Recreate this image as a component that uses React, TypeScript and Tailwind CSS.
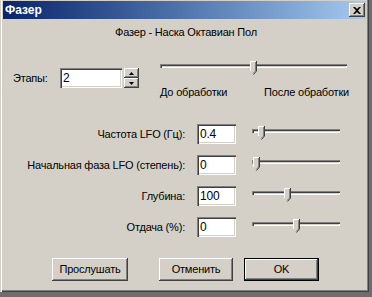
const raised =
  'shadow-[inset_-1px_-1px_#404040,inset_1px_1px_#ffffff,inset_-2px_-2px_#808080]';
const sunken =
  'shadow-[inset_1px_1px_#808080,inset_2px_2px_#404040,inset_-1px_-1px_#ffffff,inset_-2px_-2px_#d4d0c8]';

function Thumb() {
  return (
    <svg width="7" height="14" viewBox="0 0 7 14" className="block">
      <polygon points="0,0 7,0 7,10 3.5,13.5 0,10" fill="#d4d0c8" />
      <polyline points="0.5,10 0.5,0.5 6,0.5" fill="none" stroke="#ffffff" />
      <polyline points="5.5,1 5.5,10 3,12.5" fill="none" stroke="#808080" />
      <polyline points="6.5,0 6.5,10 3.5,13.5" fill="none" stroke="#404040" />
    </svg>
  );
}

function Slider({ width, pos }: { width: number; pos: number }) {
  return (
    <div className="relative h-[16px]" style={{ width }}>
      <div className="absolute left-0 right-0 top-[5px] h-[4px] bg-[#d4d0c8] shadow-[inset_1px_1px_#808080,inset_2px_2px_#404040,inset_-1px_-1px_#ffffff]" />
      <div className="absolute top-[2px]" style={{ left: pos }}>
        <Thumb />
      </div>
    </div>
  );
}

function Field({ value, width }: { value: string; width: number }) {
  return (
    <div
      className={`h-[20px] bg-white ${sunken} pl-[3px] text-[12px] leading-[20px] text-black`}
      style={{ width }}
    >
      {value}
    </div>
  );
}

function Arrow({ up }: { up?: boolean }) {
  return (
    <svg width="5" height="3" viewBox="0 0 5 3" className="block">
      <polygon points={up ? '2.5,0 5,3 0,3' : '0,0 5,0 2.5,3'} fill="#000" />
    </svg>
  );
}

const rows = [
  { label: 'Частота LFO (Гц):', value: '0.4', pos: 6 },
  { label: 'Начальная фаза LFO (степень):', value: '0', pos: 1 },
  { label: 'Глубина:', value: '100', pos: 32 },
  { label: 'Отдача (%):', value: '0', pos: 41 },
];

export default function App() {
  return (
    <div className="w-[372px] h-[297px] bg-[#6e6e6e] overflow-hidden font-['Liberation_Sans',Arial,sans-serif] text-[11px] tracking-[-0.2px] text-black">
      <div className="w-[369px] h-[292px] bg-[#d4d0c8] pt-[1px] px-[3px] flex flex-col shadow-[inset_1px_0_#d4d0c8,inset_2px_0_#ffffff,inset_-1px_-1px_#404040,inset_-2px_-2px_#808080]">
        {/* title bar */}
        <div className="h-[18px] flex items-center justify-between pl-[2px] pr-[1px] bg-gradient-to-r from-[#0a246a] to-[#a6caf0]">
          <span className="text-white font-bold text-[12px] leading-[18px] tracking-normal">Фазер</span>
          <div className={`w-[16px] h-[14px] bg-[#d4d0c8] ${raised} flex items-center justify-center`}>
            <svg width="8" height="7" viewBox="0 0 8 7">
              <path d="M0 0h2l2 2 2-2h2L5 3.5 8 7H6L4 5 2 7H0l3-3.5z" fill="#000" />
            </svg>
          </div>
        </div>

        <div className="mt-[7px] h-[13px] leading-[13px] text-center pl-[3px]">Фазер - Наска Октавиан Пол</div>

        {/* stages + preview slider */}
        <div className="mt-[20px] flex items-start">
          <div className="mt-[9px] flex items-center">
            <span className="ml-[10px] w-[47px]">Этапы:</span>
            <Field value="2" width={62} />
            <div className="ml-[2px] flex flex-col w-[15px]">
              <div className={`h-[10px] bg-[#d4d0c8] ${raised} flex items-center justify-center`}>
                <Arrow up />
              </div>
              <div className={`h-[10px] bg-[#d4d0c8] ${raised} flex items-center justify-center`}>
                <Arrow />
              </div>
            </div>
          </div>
          <div className="ml-[21px] w-[189px] flex flex-col">
            <Slider width={187} pos={90} />
            <div className="mt-[11px] h-[13px] leading-[13px] flex justify-between">
              <span>До обработки</span>
              <span>После обработки</span>
            </div>
          </div>
        </div>

        {/* parameter rows */}
        <div className="mt-[25px] flex flex-col gap-[11px]">
          {rows.map((r) => (
            <div key={r.label} className="h-[20px] flex items-start">
              <span className="w-[182px] text-right leading-[20px]">{r.label}</span>
              <div className="ml-[12px]">
                <Field value={r.value} width={39} />
              </div>
              <div className="ml-[16px]">
                <Slider width={88} pos={r.pos} />
              </div>
            </div>
          ))}
        </div>

        {/* buttons */}
        <div className="mt-[21px] flex">
          <div className={`ml-[49px] w-[76px] h-[23px] ${raised} flex items-center justify-center`}>Прослушать</div>
          <div className={`ml-[31px] w-[74px] h-[23px] ${raised} flex items-center justify-center`}>Отменить</div>
          <div className="ml-[11px] w-[75px] h-[23px] border border-black">
            <div className={`h-full ${raised} flex items-center justify-center`}>OK</div>
          </div>
        </div>
      </div>
    </div>
  );
}
